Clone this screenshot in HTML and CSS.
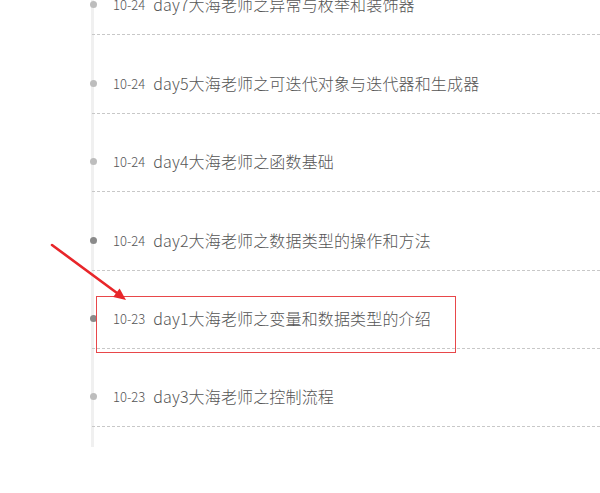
FILE: index.html
```html
<!DOCTYPE html>
<html lang="zh-CN">
<head>
<meta charset="utf-8">
<title>timeline</title>
<link rel="stylesheet" href="styles.css">
</head>
<body>
<div class="page">
  <ul class="timeline">
    <li class="item"><span class="dot"></span><span class="date">10-24</span><span class="title">day7大海老师之异常与枚举和装饰器</span></li>
    <li class="item"><span class="dot"></span><span class="date">10-24</span><span class="title">day5大海老师之可迭代对象与迭代器和生成器</span></li>
    <li class="item"><span class="dot"></span><span class="date">10-24</span><span class="title">day4大海老师之函数基础</span></li>
    <li class="item"><span class="dot dark"></span><span class="date">10-24</span><span class="title">day2大海老师之数据类型的操作和方法</span></li>
    <li class="item"><span class="dot dark"></span><span class="date">10-23</span><span class="title">day1大海老师之变量和数据类型的介绍</span></li>
    <li class="item"><span class="dot"></span><span class="date">10-23</span><span class="title">day3大海老师之控制流程</span></li>
  </ul>
  <div class="highlight"></div>
  <svg class="arrow" width="140" height="310" viewBox="0 0 140 310">
    <line x1="52" y1="245" x2="117" y2="293" stroke="#e8262a" stroke-width="2.6" stroke-linecap="round"/>
    <polygon points="126,300 113.2,297 119.6,288.6" fill="#e8262a"/>
  </svg>
</div>
</body>
</html>
```
FILE: styles.css
```css
* { box-sizing: border-box; }
html, body { margin: 0; padding: 0; background: #fff; }
body {
  font-family: "Noto Sans CJK SC", "Noto Sans", sans-serif;
  color: #555;
  overflow: hidden;
}
.page {
  position: relative;
  width: 600px;
  height: 493px;
  overflow: hidden;
}
.timeline {
  list-style: none;
  margin: -43px 0 0 91px;
  padding: 0 0 20px 0;
  border-left: 3px solid #f0f0f0;
}
.item {
  position: relative;
  height: 78.4px;
  margin-left: -2px;
  padding: 0 0 18px 21px;
  border-bottom: 1px dashed #c8c8c8;
  display: flex;
  align-items: flex-end;
}
.dot {
  position: absolute;
  left: -2px;
  bottom: 26px;
  width: 7px;
  height: 7px;
  border-radius: 50%;
  background: #bdbdbd;
}
.dot.dark { background: #8a8a8a; }
.date {
  font-size: 13px;
  line-height: 23px;
  font-weight: 300;
  color: #555;
  margin-right: 8px;
}
.title {
  font-size: 16px;
  line-height: 24px;
  font-weight: 300;
  letter-spacing: 0.15px;
  color: #555;
}
.highlight {
  position: absolute;
  left: 96px;
  top: 296px;
  width: 360px;
  height: 57px;
  border: 1.5px solid #e8474a;
}
.arrow {
  position: absolute;
  left: 0;
  top: 0;
}
```
